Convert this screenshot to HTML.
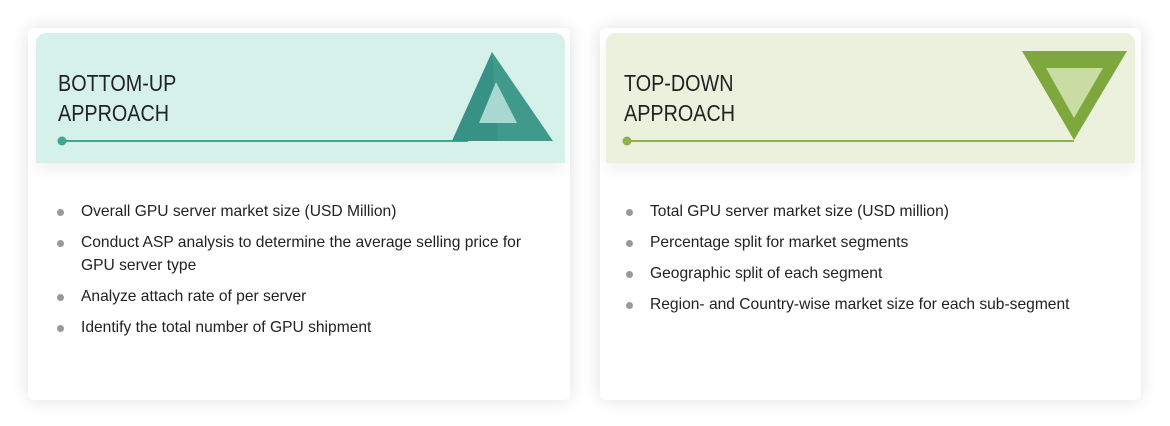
<!DOCTYPE html>
<html><head><style>
*{margin:0;padding:0;box-sizing:border-box}
body{width:1170px;height:426px;background:#fff;position:relative;overflow:hidden;font-family:"Liberation Sans",sans-serif}
.card{position:absolute;top:28px;height:372px;background:#fff;border-radius:6px;box-shadow:0 0 18px rgba(0,0,0,0.12)}
.hdr{position:absolute;top:5px;height:130px;border-radius:10px 10px 0 0;box-shadow:0 8px 14px rgba(0,0,0,0.05)}
.title{position:absolute;font-size:23px;line-height:30px;color:#222;transform:scaleX(0.86);transform-origin:0 0;white-space:nowrap}
ul{list-style:none;position:absolute}
li{position:relative;padding-left:24px;font-size:15.6px;line-height:23px;color:#222;margin-bottom:8px;white-space:nowrap}
li:before{content:"";position:absolute;left:0;top:9px;width:7px;height:7px;border-radius:50%;background:#999}
</style></head><body>
<svg style="position:absolute;left:0;top:0" width="1170" height="426">
<g stroke="#eee" stroke-width="1" fill="none">
<polyline points="420,400 490,330 560,400"/><polyline points="380,400 490,290 570,370"/>
<polyline points="460,240 510,190 570,250"/><polyline points="990,400 1060,330 1130,400"/>
<polyline points="950,400 1060,290 1140,370"/><polyline points="1030,240 1080,190 1140,250"/>
</g></svg>
<div class="card" style="left:28px;width:542px">
 <div class="hdr" style="left:8px;width:529px;background:#d6f0ea"></div>
 <div class="title" style="left:30px;top:40px">BOTTOM-UP<br>APPROACH</div>
 <svg style="position:absolute;left:0;top:0" width="542" height="140">
  <line x1="34" y1="113" x2="440" y2="113" stroke="#3aa98f" stroke-width="2"/>
  <circle cx="34" cy="113" r="4.5" fill="#3aa98f"/>
  <polygon points="464,24 424,113 525,113" fill="#3f9a8c"/>
  <polygon points="464,24 424,113 470,113" fill="#2f8a7e" opacity="0.5"/>
  <polygon points="468,54 451,95 489,95" fill="#a8d8cf"/>
 </svg>
 <ul style="left:29px;top:172px">
  <li>Overall GPU server market size (USD Million)</li>
  <li>Conduct ASP analysis to determine the average selling price for<br>GPU server type</li>
  <li>Analyze attach rate of per server</li>
  <li>Identify the total number of GPU shipment</li>
 </ul>
</div>
<div class="card" style="left:600px;width:541px">
 <div class="hdr" style="left:6px;width:529px;background:#ebf1dd"></div>
 <div class="title" style="left:24px;top:40px">TOP-DOWN<br>APPROACH</div>
 <svg style="position:absolute;left:0;top:0" width="541" height="140">
  <line x1="27" y1="113" x2="474" y2="113" stroke="#8db34a" stroke-width="2"/>
  <circle cx="27" cy="113" r="4.5" fill="#8db34a"/>
  <polygon points="422,23 527,23 474,112" fill="#7ea83e"/>
  <polygon points="446,40 503,40 474,90" fill="#c9dca3"/>
 </svg>
 <ul style="left:26px;top:172px">
  <li>Total GPU server market size (USD million)</li>
  <li>Percentage split for market segments</li>
  <li>Geographic split of each segment</li>
  <li>Region- and Country-wise market size for each sub-segment</li>
 </ul>
</div>
</body></html>
